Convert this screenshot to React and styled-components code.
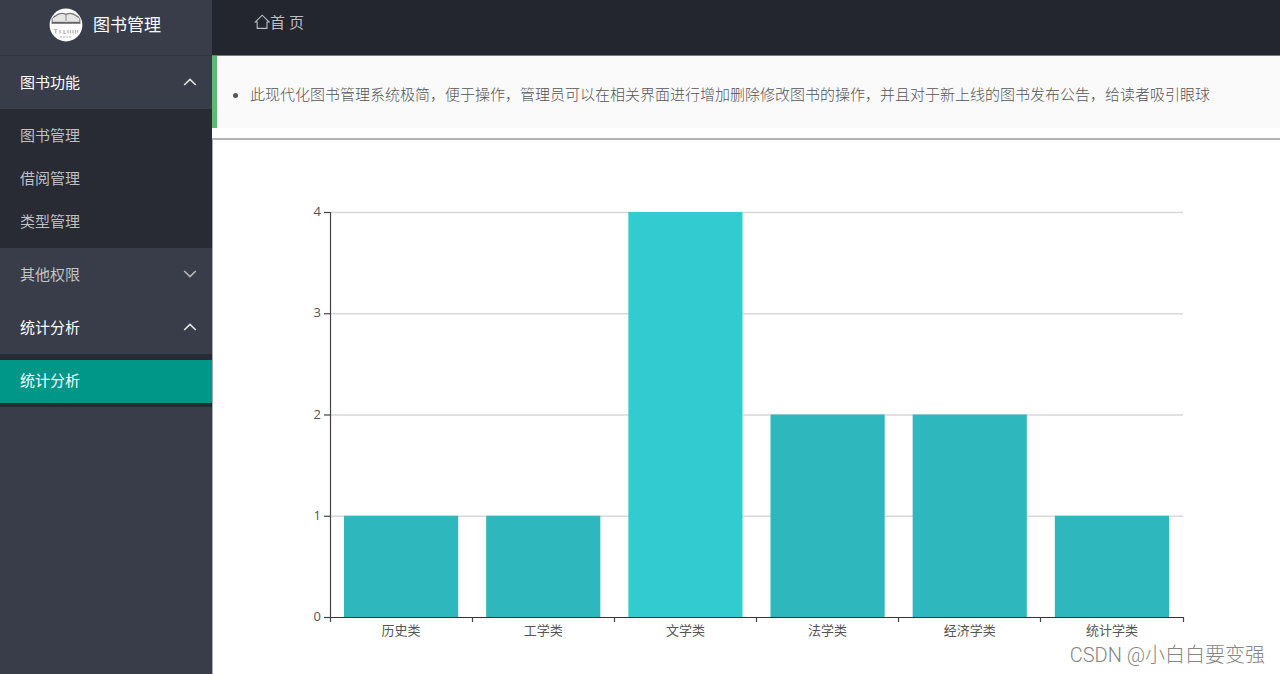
import React, { useState } from 'react'
import styled, { createGlobalStyle } from 'styled-components'

const colors = {
    side: '#393d49',
    sub: '#282b33',
    header: '#23262e',
    active: '#009688',
    green: '#5fb878',
    bar: '#2fb7be',
    barHover: '#32cbd0',
}

const menu = [
    { title: '图书功能', open: true, items: ['图书管理', '借阅管理', '类型管理'] },
    { title: '其他权限', open: false, items: [] },
    { title: '统计分析', open: true, items: ['统计分析'], active: true },
]

const bookTypes = [
    { name: '历史类', count: 1 },
    { name: '工学类', count: 1 },
    { name: '文学类', count: 4 },
    { name: '法学类', count: 2 },
    { name: '经济学类', count: 2 },
    { name: '统计学类', count: 1 },
]

function Arrow({ open }) {
    return (
        <svg width="14" height="8" viewBox="0 0 14 8" fill="none" stroke="currentColor" strokeWidth="1.6" aria-hidden="true">
            <path d={open ? 'M1.2 7 L7 1.4 L12.8 7' : 'M1.2 1 L7 6.6 L12.8 1'} />
        </svg>
    )
}

function Logo() {
    return (
        <svg width="34" height="34" viewBox="0 0 34 34" fill="none" aria-hidden="true">
            <circle cx="17" cy="17" r="16.4" fill="#fdfdfd" />
            <path d="M3 14 V9 L6 8 Q11 3.5 16 6.2 V14 Z M31 14 V9 L28 8 Q23 3.5 18 6.2 V14 Z" fill="#e6e6e6" />
            <path d="M4 9.5 L7 7.6 Q12 3.8 17 6.4 Q22 3.8 27 7.6 L30 9.5" stroke="#777" strokeWidth="1.3" />
            <path d="M17 6 V13 M3.2 10 V14 M30.8 10 V14" stroke="#888" strokeWidth="1.2" />
            <path d="M2.6 14.8 H31.4" stroke="#666" strokeWidth="2" />
            <path d="M5 21.5 H8.5 M6.7 21.5 V25.5 M11 22 V25.5 M15 22 V25.5 H17 M19 22 V25.5 M21.5 22 V25.5 M24 22 V25.5 M26.5 22 V25.5 M28.5 22 V24.5" stroke="#b4b4b4" strokeWidth="1.2" />
            <path d="M11 29 H23" stroke="#ccc" strokeWidth="1.6" strokeDasharray="2 1" />
        </svg>
    )
}

function HomeIcon() {
    return (
        <svg width="16" height="16" viewBox="0 0 16 16" fill="none" stroke="currentColor" strokeWidth="1.1" aria-hidden="true">
            <path d="M3.2 8 H1.2 L8.2 1.2 L15.2 8 H13 V14.4 H3.2 Z" />
        </svg>
    )
}

function Chart({ data }) {
    const left = 117
    const right = 970
    const top = 72
    const bottom = 477
    const step = (right - left) / data.length
    const max = 4
    const y = (value) => bottom - (value * (bottom - top)) / max

    return (
        <ChartSvg viewBox="0 0 1067 534" role="img" aria-label="统计分析">
            {[0, 1, 2, 3, 4].map(value => (
                <g key={value}>
                    {value > 0 && <path d={`M${left} ${y(value) + 0.5} H${right}`} stroke="#d8d8d8" strokeWidth="1.5" />}
                    <path d={`M${left - 6} ${y(value) + 0.5} H${left}`} stroke="#444" strokeWidth="1.2" />
                    <AxisText x={left - 9} y={y(value) + 4} textAnchor="end">{value}</AxisText>
                </g>
            ))}
            {data.map(({ name, count }, i) => (
                <g key={name}>
                    <rect
                        x={left + step * i + 14}
                        y={y(count)}
                        width={step - 28}
                        height={bottom - y(count)}
                        fill={count === max ? colors.barHover : colors.bar}
                    />
                    <AxisText x={left + step * (i + 0.5)} y={bottom + 18} textAnchor="middle">{name}</AxisText>
                </g>
            ))}
            <path d={`M${left + 0.5} ${top} V${bottom}`} stroke="#444" strokeWidth="1.2" />
            <path d={`M${left} ${bottom + 0.5} H${right}`} stroke="#333" strokeWidth="1.2" />
            {[0, 1, 2, 3, 4, 5, 6].map(i => (
                <path key={i} d={`M${Math.floor(left + step * i) + 0.5} ${bottom} v5`} stroke="#444" strokeWidth="1.2" />
            ))}
        </ChartSvg>
    )
}

export default function App() {
    const [groups, setGroups] = useState(menu)

    const toggle = (title) => {
        setGroups(groups.map(group => group.title === title ? { ...group, open: !group.open } : group))
    }

    return (
        <Layout>
            <GlobalStyle />
            <Side>
                <Brand><Logo />图书管理</Brand>
                <nav>
                    {groups.map(({ title, open, items, active }) => (
                        <div key={title}>
                            <GroupButton type="button" $open={open} aria-expanded={open} onClick={() => toggle(title)}>
                                {title}
                                <Arrow open={open} />
                            </GroupButton>
                            {open && items.length > 0 && (
                                <SubMenu>
                                    {items.map(item => (
                                        <li key={item}><SubLink href="#" $active={active}>{item}</SubLink></li>
                                    ))}
                                </SubMenu>
                            )}
                        </div>
                    ))}
                </nav>
            </Side>
            <Main>
                <Header>
                    <HomeLink href="#"><HomeIcon />首 页</HomeLink>
                </Header>
                <Notice>
                    <ul>
                        <li>此现代化图书管理系统极简，便于操作，管理员可以在相关界面进行增加删除修改图书的操作，并且对于新上线的图书发布公告，给读者吸引眼球</li>
                    </ul>
                </Notice>
                <Frame>
                    <Chart data={bookTypes} />
                </Frame>
            </Main>
            <Watermark>CSDN @小白白要变强</Watermark>
        </Layout>
    )
}

const GlobalStyle = createGlobalStyle`
* {
    box-sizing: border-box;
}
body {
    margin: 0;
    font-family: "Open Sans", "Noto Sans CJK SC", sans-serif;
    font-size: 15px;
    line-height: 24px;
    background: #fff;
}
`

const Layout = styled.div`
    display: flex;
    min-height: 100vh;
    position: relative;
`

const Side = styled.aside`
    width: 212px;
    flex-shrink: 0;
    background: ${colors.side};
`

const Brand = styled.div`
    display: flex;
    align-items: center;
    justify-content: center;
    gap: 10px;
    height: 56px;
    padding: 0 2px 6px 0;
    border-bottom: 1px solid #30333d;
    color: #fff;
    font-size: 17px;
`

const GroupButton = styled.button`
    display: flex;
    align-items: center;
    justify-content: space-between;
    width: 100%;
    height: 53px;
    padding: 0 15px 2px 20px;
    border: 0;
    background: none;
    color: ${({ $open }) => $open ? '#fff' : '#c2c3c6'};
    font: inherit;
    cursor: pointer;
    & svg {
        color: ${({ $open }) => $open ? '#e2e3e5' : '#b4b6ba'};
    }
`

const SubMenu = styled.ul`
    margin: 0;
    padding: 6px 0 4px;
    list-style: none;
    background: ${colors.sub};
`

const SubLink = styled.a`
    display: block;
    height: 43px;
    padding: 0 20px;
    line-height: 41px;
    text-decoration: none;
    color: ${({ $active }) => $active ? '#fff' : '#bebfc2'};
    background: ${({ $active }) => $active ? colors.active : 'none'};
`

const Main = styled.main`
    flex: 1;
    min-width: 0;
    display: flex;
    flex-direction: column;
`

const Header = styled.header`
    display: flex;
    align-items: center;
    height: 56px;
    padding: 0 42px 12px;
    background: ${colors.header};
    border-bottom: 1px solid #77797d;
`

const HomeLink = styled.a`
    display: flex;
    align-items: center;
    color: #bdbec0;
    text-decoration: none;
`

const Notice = styled.section`
    margin-bottom: 10px;
    padding: 26px 16px 22px;
    border-left: 5px solid ${colors.green};
    background: #fafafa;
    color: #555;
    font-weight: 300;
    & ul {
        margin: 0;
        padding-left: 17px;
    }
`

const Frame = styled.section`
    flex: 1;
    border-top: 2px solid #b4b4b4;
    border-left: 1px solid #a8a8a8;
`

const ChartSvg = styled.svg`
    display: block;
    width: 100%;
    height: auto;
`

const AxisText = styled.text`
    font-size: 13px;
    fill: #555;
`

const Watermark = styled.span`
    position: absolute;
    right: 15px;
    bottom: 7px;
    color: #858585;
    font-family: Roboto, "Noto Sans CJK SC", sans-serif;
    font-size: 20px;
    font-weight: 300;
    line-height: 24px;
`
